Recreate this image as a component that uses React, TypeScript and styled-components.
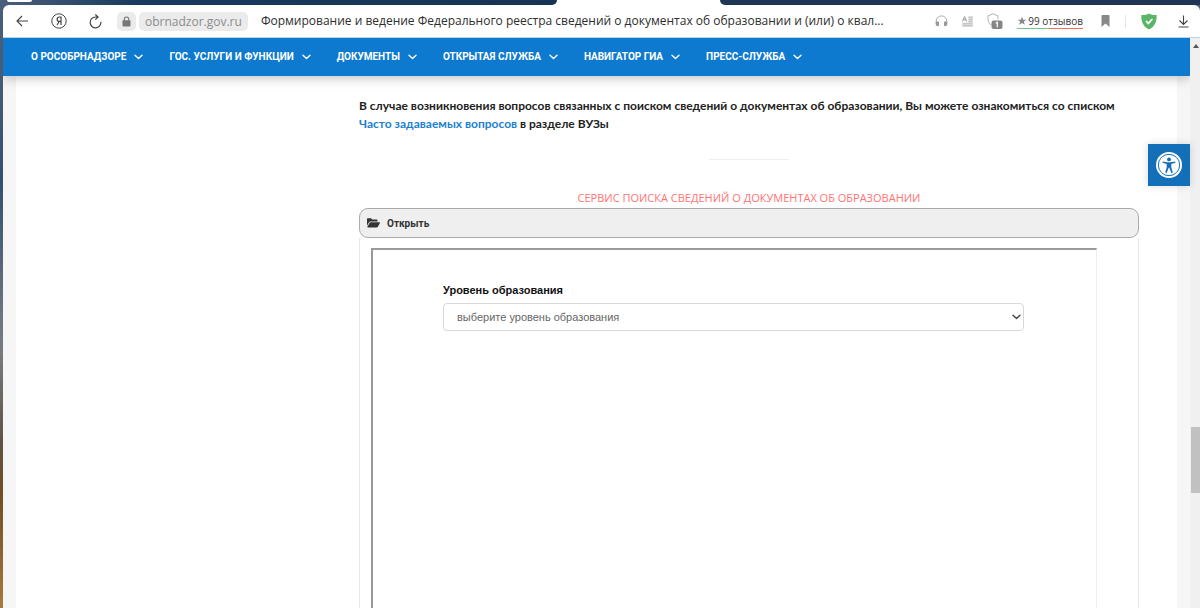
import React from "react";
import styled, { createGlobalStyle } from "styled-components";

const GlobalStyle = createGlobalStyle`
  *, *::before, *::after { box-sizing: border-box; }
  body {
    margin: 0;
    background: #fff;
    font-family: "Open Sans", "Noto Sans", sans-serif;
  }
  button { font: inherit; color: inherit; border: 0; padding: 0; background: none; cursor: pointer; }
`;

const Desktop = styled.div`
  min-height: 100vh;
  display: flex;
  flex-direction: column;
  padding-left: 3px;
  background: linear-gradient(to bottom, #4b5f7b 0, #465a76 15%, #34506f 30%, #6b7680 52%, #777b7e 58%, #5f5243 73%, #734d25 81%, #8a6130 90%, #a87b3c 100%);
`;

const TabStrip = styled.div`
  height: 5px;
  margin-left: -3px;
  display: flex;
  background: #fff;
`;

const TabGroup = styled.div<{ $side: "left" | "right" }>`
  flex: ${(p) => (p.$side === "left" ? "0 0 557px" : "1 1 0")};
  margin-left: ${(p) => (p.$side === "left" ? "0" : "163px")};
  padding-left: ${(p) => (p.$side === "left" ? "7px" : "0")};
  border-radius: ${(p) => (p.$side === "left" ? "0 0 6px 0" : "0 0 0 6px")};
  background: ${(p) => (p.$side === "left" ? "linear-gradient(to right, #4b5f7b, #173a5e 25%, #173354)" : "#213555")};
`;

const PinnedTab = styled.div`
  width: 25px;
  height: 2px;
  background: #fff;
  border-radius: 0 0 3px 3px;
`;

const Toolbar = styled.header`
  height: 33px;
  display: flex;
  align-items: center;
  background: #fff;
  border-radius: 6px 6px 0 0;
  border-bottom: 1px solid #b9d3e8;
  padding: 0 11px 0 13px;
`;

const ToolGroup = styled.div<{ $gap: number }>`
  flex: none;
  display: flex;
  align-items: center;
  gap: ${(p) => p.$gap}px;
`;

const ActionGroup = styled(ToolGroup)`
  margin-left: 18px;
`;

const ToolButton = styled.button`
  display: flex;
  align-items: center;
  justify-content: center;
`;

const DownloadButton = styled(ToolButton)`
  margin-left: 6px;
`;

const LockButton = styled(ToolButton)`
  width: 19px;
  height: 19px;
  margin-left: 15px;
  border-radius: 5px;
  background: #ebebeb;
`;

const Host = styled.button`
  height: 19px;
  margin-left: 3px;
  padding: 0 6px;
  border-radius: 5px;
  background: #ebebeb;
  color: #8c8c8c;
  font-size: 12px;
  line-height: 19px;
`;

const PageTitle = styled.div`
  flex: 1;
  min-width: 0;
  margin-left: 13px;
  overflow: hidden;
  white-space: nowrap;
  color: #2d2d2d;
  font-size: 12px;
  line-height: 20px;
`;

const Reviews = styled.button`
  display: flex;
  align-items: center;
  gap: 1px;
  height: 15px;
  border-bottom: 1px solid;
  border-image: linear-gradient(to right, #74c58c 48%, #f0705f 48%) 1;
  color: #333;
  font-size: 10px;
  line-height: 14px;
  white-space: nowrap;
`;

const Separator = styled.span`
  width: 1px;
  height: 13px;
  background: #e6e6e6;
`;

const Viewport = styled.div`
  flex: 1;
  display: flex;
`;

const Page = styled.div`
  flex: 1;
  min-width: 0;
  display: flex;
  flex-direction: column;
  background: #f6f6f6;
`;

const Nav = styled.nav`
  position: relative;
  height: 38px;
  display: flex;
  align-items: center;
  gap: 26px;
  padding-left: 28px;
  background: #0d7acf;
  box-shadow: 0 2px 12px rgba(0, 0, 0, 0.25);
  clip-path: inset(0 0 -20px 0);
`;

const NavItem = styled.button`
  display: flex;
  align-items: center;
  gap: 8px;
  color: #fff;
  font-family: Roboto, "Noto Sans", sans-serif;
  font-size: 10px;
  font-weight: 700;
  line-height: 16px;
  white-space: nowrap;
`;

const Sheet = styled.main`
  flex: 1;
  display: flex;
  flex-direction: column;
  margin: 0 13px;
  padding: 21px 38px 0 343px;
  background: #fff;
  font-family: Lato, "Noto Sans", sans-serif;
`;

const Notice = styled.p`
  margin: 0;
  color: #222;
  font-size: 12px;
  font-weight: 700;
  line-height: 18px;
`;

const FaqLink = styled.a`
  color: #1c7fd0;
  text-decoration: none;
`;

const Divider = styled.hr`
  width: 80px;
  height: 1px;
  margin: 26px auto 28px;
  border: 0;
  background: #eee;
`;

const ServiceTitle = styled.h2`
  margin: 0 0 1px;
  color: #ff7373;
  font-family: "Open Sans", "Noto Sans", sans-serif;
  font-size: 11px;
  font-weight: 400;
  line-height: 19px;
  text-align: center;
`;

const Spoiler = styled.section`
  flex: 1;
  display: flex;
  flex-direction: column;
`;

const SpoilerToggle = styled.button`
  height: 30px;
  display: flex;
  align-items: center;
  gap: 7px;
  padding: 0 7px;
  border: 1px solid #aaa;
  border-radius: 9px;
  background: #efefef;
  color: #333;
  font-family: Roboto, "Noto Sans", sans-serif;
  font-size: 10px;
  font-weight: 700;
`;

const SpoilerBody = styled.div`
  flex: 1;
  display: flex;
  padding: 10px 41px 0 11px;
  border: solid #e8e8e8;
  border-width: 0 1px;
`;

const ServiceFrame = styled.div`
  flex: 1;
  padding: 31px 72px 0 70px;
  border: solid #9a9a9a;
  border-width: 2px 1px 0 2px;
  border-right-color: #eee;
  font-family: "Liberation Sans", Arial, sans-serif;
  font-size: 11px;
`;

const FieldLabel = styled.label`
  display: block;
  margin-bottom: 4px;
  color: #111;
  font-weight: 700;
  line-height: 18px;
`;

const SelectBox = styled.div`
  display: grid;
  align-items: center;
  > * { grid-area: 1 / 1; }
  > svg { justify-self: end; margin-right: 3px; pointer-events: none; }
`;

const LevelSelect = styled.select`
  appearance: none;
  width: 100%;
  height: 28px;
  padding: 0 13px;
  border: 1px solid #d8d8d8;
  border-radius: 4px;
  background: #fff;
  color: #666;
  font: inherit;
`;

const AccessButton = styled.button`
  position: fixed;
  top: 144px;
  right: 10px;
  width: 42px;
  height: 42px;
  display: flex;
  align-items: center;
  justify-content: center;
  background: #136fb8;
  box-shadow: 0 0 8px rgba(0, 0, 0, 0.15);
`;

const ScrollTrack = styled.div`
  width: 10px;
  display: flex;
  flex-direction: column;
  background: #f0f0f0;
`;

const ScrollUp = styled.button`
  height: 16px;
  padding-left: 3px;
  display: flex;
  align-items: center;
`;

const ScrollThumb = styled.div`
  height: 66px;
  margin: 373px 0 0 1px;
  background: #c1c1c1;
`;

const Chevron = ({ color = "#fff", width = 1.4 }: { color?: string; width?: number }) => (
  <svg width="9" height="6" viewBox="0 0 9 6" fill="none" stroke={color} strokeWidth={width} strokeLinecap="round" strokeLinejoin="round">
    <path d="M1 1.2 4.5 4.6 8 1.2" />
  </svg>
);

const BackIcon = () => (
  <svg width="13" height="12" viewBox="0 0 13 12" fill="none" stroke="#444" strokeWidth="1.1">
    <path d="M12 6H1M6 1 1 6l5 5" />
  </svg>
);

const YandexIcon = () => (
  <svg width="16" height="16" viewBox="0 0 16 16" fill="none" stroke="#444">
    <circle cx="8" cy="8" r="7.2" strokeWidth="1" />
    <path d="M10 12V4H8.500C6.900 4 6.100 5 6.100 6.200c0 1.400.9 2.200 2.400 2.200H10M8.200 8.500 6 12" strokeWidth="1.200" />
  </svg>
);

const ReloadIcon = () => (
  <svg width="13" height="15" viewBox="0 0 13 15" fill="none" stroke="#444" strokeWidth="1.2">
    <path d="M11.900 7.800A5.400 5.400 0 1 1 6.500 3h2.500M6.300.5 9.100 3 6.300 5.600" />
  </svg>
);

const LockIcon = () => (
  <svg width="9" height="11" viewBox="0 0 9 11">
    <path d="M2.3 5V3.2a2.2 2.2 0 0 1 4.4 0V5" fill="none" stroke="#777" strokeWidth="1.1" />
    <rect x=".5" y="4.3" width="8" height="6.2" rx="1" fill="#777" />
  </svg>
);

const HeadphonesIcon = () => (
  <svg width="13" height="12" viewBox="0 0 13 12">
    <path d="M1.2 9V6.2a5.3 5.3 0 0 1 10.6 0V9" fill="none" stroke="#aaa" strokeWidth="1" />
    <path d="M.8 6.5h2.4c.6 0 .8.3.8.8V11H2.2C1.200 11 .8 10.500.8 9.800ZM12.200 6.500H9.800c-.6 0-.8.3-.8.8V11h1.800c1 0 1.400-.5 1.400-1.200Z" fill="#999" />
  </svg>
);

const ReaderIcon = () => (
  <svg width="11" height="11" viewBox="0 0 11 11" fill="none">
    <path d="M6.500 0H11v11H0V6.500h6.500Z" fill="#ddd" />
    <path d="M.5 5.500 2.600.5l2.100 5M1.200 3.800h2.800" stroke="#999" />
    <path d="M6.500 1.500H10M6.500 3.500H10M6.500 5.500H10M1 7.700h9M1 9.700h9" stroke="#c2c2c2" />
  </svg>
);

const BlockerIcon = () => (
  <svg width="16" height="17" viewBox="0 0 16 17">
    <path d="M6 .8 11 2.800v3.500M6 .8 1 2.800v3.500C1 9.500 2.600 11.200 4.500 12.200" fill="none" stroke="#aaa" strokeWidth=".9" />
    <rect x="4.500" y="7.500" width="11" height="8.500" rx="2" fill="#868686" />
    <path d="M8.800 10.300 10.300 9.300v4.900" fill="none" stroke="#fff" strokeWidth="1.200" />
  </svg>
);

const StarIcon = () => (
  <svg width="10" height="10" viewBox="0 0 10 10">
    <path d="m5 .7 1.200 3h3.200L6.900 5.600l.9 3.200L5 7 2.200 8.800l.9-3.200L.6 3.700h3.200Z" fill="#888" />
  </svg>
);

const BookmarkIcon = () => (
  <svg width="9" height="12" viewBox="0 0 9 12">
    <path d="M.5 1c0-.6.300-1 1-1h6c.7 0 1 .4 1 1v11l-4-3.400-4 3.400Z" fill="#888" />
  </svg>
);

const ProtectIcon = () => (
  <svg width="16" height="17" viewBox="0 0 16 17">
    <path d="M8 .5c2.300 1.200 4.600 1.700 7.600 1.500C16 8.500 14 13.500 8 16.500 2 13.500 0 8.500.4 2 3.400 2.200 5.700 1.700 8 .5Z" fill="#59b568" />
    <path d="m5 8 2.300 2.400L11.300 6" fill="none" stroke="#fff" strokeWidth="1.800" />
  </svg>
);

const DownloadIcon = () => (
  <svg width="11" height="13" viewBox="0 0 11 13" fill="none" stroke="#444" strokeWidth="1.100">
    <path d="M5.500.5v9M1.500 5.500l4 4 4-4M.5 12h10" />
  </svg>
);

const FolderIcon = () => (
  <svg width="13" height="10" viewBox="0 0 13 10" fill="#333">
    <path d="M0 7.800V1.200C0 .5.400.2 1 .2h3l1.300 1.300h4.200c.6 0 1 .4 1 1v1H3.600c-.8 0-1.300.3-1.700 1Z" />
    <path d="M3.700 4.300h8.700c.5 0 .7.300.5.7l-2 3.700c-.3.500-.7.800-1.200.8H.9c-.5 0-.7-.3-.5-.7l2.100-3.700c.3-.5.700-.8 1.200-.8Z" />
  </svg>
);

const AccessIcon = () => (
  <svg width="26" height="26" viewBox="0 0 26 26">
    <circle cx="13" cy="13" r="13" fill="#fff" />
    <circle cx="13" cy="13" r="10.700" fill="none" stroke="#136fb8" strokeWidth="1" />
    <circle cx="13" cy="7.400" r="1.900" fill="#136fb8" />
    <path d="M6.800 9.500 11.200 10.300h3.600l4.400-.8.200 1.300-4.100 1.100v3.600l1.500 5-1.500.5-2-5.300h-.6l-2 5.300-1.500-.5 1.500-5v-3.600l-4.100-1.100Z" fill="#136fb8" />
  </svg>
);

const menu = ["О РОСОБРНАДЗОРЕ", "ГОС. УСЛУГИ И ФУНКЦИИ", "ДОКУМЕНТЫ", "ОТКРЫТАЯ СЛУЖБА", "НАВИГАТОР ГИА", "ПРЕСС-СЛУЖБА"];

export default function App() {
  return (
    <Desktop>
      <GlobalStyle />
      <TabStrip>
        <TabGroup $side="left">
          <PinnedTab />
        </TabGroup>
        <TabGroup $side="right" />
      </TabStrip>
      <Toolbar>
        <ToolGroup $gap={22}>
          <ToolButton aria-label="Назад"><BackIcon /></ToolButton>
          <ToolButton aria-label="Яндекс"><YandexIcon /></ToolButton>
          <ToolButton aria-label="Обновить"><ReloadIcon /></ToolButton>
        </ToolGroup>
        <LockButton aria-label="Защищённое соединение"><LockIcon /></LockButton>
        <Host>obrnadzor.gov.ru</Host>
        <PageTitle>Формирование и ведение Федерального реестра сведений о документах об образовании и (или) о квал...</PageTitle>
        <ToolGroup $gap={14}>
          <ToolButton aria-label="Озвучить"><HeadphonesIcon /></ToolButton>
          <ToolButton aria-label="Режим чтения"><ReaderIcon /></ToolButton>
          <ToolButton aria-label="Блокировщик"><BlockerIcon /></ToolButton>
          <Reviews><StarIcon />99 отзывов</Reviews>
        </ToolGroup>
        <ActionGroup $gap={15}>
          <ToolButton aria-label="Закладка"><BookmarkIcon /></ToolButton>
          <Separator />
          <ToolButton aria-label="Защита"><ProtectIcon /></ToolButton>
          <DownloadButton aria-label="Загрузки"><DownloadIcon /></DownloadButton>
        </ActionGroup>
      </Toolbar>
      <Viewport>
        <Page>
          <Nav>
            {menu.map((label) => (
              <NavItem key={label}>{label}<Chevron /></NavItem>
            ))}
          </Nav>
          <Sheet>
            <Notice>
              В случае возникновения вопросов связанных с поиском сведений о документах об образовании, Вы можете ознакомиться со списком <FaqLink href="#faq">Часто задаваемых вопросов</FaqLink> в разделе ВУЗы
            </Notice>
            <Divider />
            <ServiceTitle>СЕРВИС ПОИСКА СВЕДЕНИЙ О ДОКУМЕНТАХ ОБ ОБРАЗОВАНИИ</ServiceTitle>
            <Spoiler>
              <SpoilerToggle aria-expanded="true"><FolderIcon />Открыть</SpoilerToggle>
              <SpoilerBody>
                <ServiceFrame>
                  <FieldLabel htmlFor="level">Уровень образования</FieldLabel>
                  <SelectBox>
                    <LevelSelect id="level">
                      <option>выберите уровень образования</option>
                    </LevelSelect>
                    <Chevron color="#444" width={1.4} />
                  </SelectBox>
                </ServiceFrame>
              </SpoilerBody>
            </Spoiler>
          </Sheet>
        </Page>
        <ScrollTrack>
          <ScrollUp aria-label="Вверх">
            <svg width="6" height="4" viewBox="0 0 6 4"><path d="M0 4 3 0l3 4Z" fill="#555" /></svg>
          </ScrollUp>
          <ScrollThumb />
        </ScrollTrack>
      </Viewport>
      <AccessButton aria-label="Специальные возможности"><AccessIcon /></AccessButton>
    </Desktop>
  );
}
